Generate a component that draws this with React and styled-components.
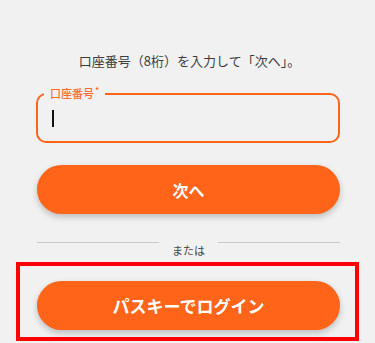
import React from "react";
import styled, { createGlobalStyle } from "styled-components";

const Global = createGlobalStyle`
  html, body { margin: 0; padding: 0; background: #f1f1f1; }
  body { font-family: "Noto Sans CJK JP", "Noto Sans", sans-serif; }
`;

const Page = styled.div`
  width: 375px;
  height: 343px;
  background: #f1f1f1;
  overflow: hidden;
  padding-top: 52px;
  box-sizing: border-box;
`;

const Column = styled.div`
  margin: 0 35px 0 37px;
  display: flex;
  flex-direction: column;
`;

const Lead = styled.p`
  margin: 0 0 0 2px;
  font-size: 13px;
  line-height: 18px;
  color: #3c3c3c;
  text-align: center;
`;

const Field = styled.div`
  position: relative;
  margin-top: 23px;
  margin-left: -1px;
  height: 50px;
  box-sizing: border-box;
  border: 2px solid #ff6419;
  border-radius: 10px;
  display: flex;
  align-items: center;
  padding-left: 14px;
`;

const Label = styled.span`
  position: absolute;
  top: -9px;
  left: 6px;
  padding: 0 6px 0 6px;
  background: #f1f1f1;
  color: #ff6b2c;
  font-size: 11px;
  font-weight: 500;
  line-height: 14px;
  sup { font-size: 9px; vertical-align: top; line-height: 10px; margin-left: 1px; }
`;

const Caret = styled.span`
  width: 1.5px;
  height: 17px;
  background: #111;
`;

const Button = styled.button`
  height: 49px;
  border: none;
  border-radius: 25px;
  background: #ff6419;
  color: #fff;
  font-family: "Noto Sans CJK JP", sans-serif;
  font-weight: 700;
  font-size: ${(p) => p.$size || 16}px;
  box-shadow: 0 3px 6px rgba(0, 0, 0, 0.22);
  margin-top: ${(p) => p.$top || 0}px;
  padding: 0;
`;

const Divider = styled.div`
  display: flex;
  align-items: flex-start;
  margin-top: 27px;
  gap: 13px;
  font-size: 11px;
  line-height: 14px;
  color: #444;
`;

const Rule = styled.span`
  flex: 1;
  height: 1px;
  background: #c9c9c9;
  margin-top: 1px;
`;

const DividerText = styled.span`
  padding-top: 2px;
`;

const Highlight = styled.div`
  margin: 5px 16px 0 16px;
  border: 4px solid #ff0000;
  padding: 15px 15px 7px 17px;
  display: flex;
  flex-direction: column;
`;

export default function App() {
  return (
    <Page>
      <Global />
      <Column>
        <Lead>口座番号（8桁）を入力して「次へ」。</Lead>
        <Field>
          <Label>
            口座番号<sup>*</sup>
          </Label>
          <Caret />
        </Field>
        <Button $top={22}>次へ</Button>
        <Divider>
          <Rule />
          <DividerText>または</DividerText>
          <Rule />
        </Divider>
      </Column>
      <Highlight>
        <Button $size={17}>パスキーでログイン</Button>
      </Highlight>
    </Page>
  );
}
